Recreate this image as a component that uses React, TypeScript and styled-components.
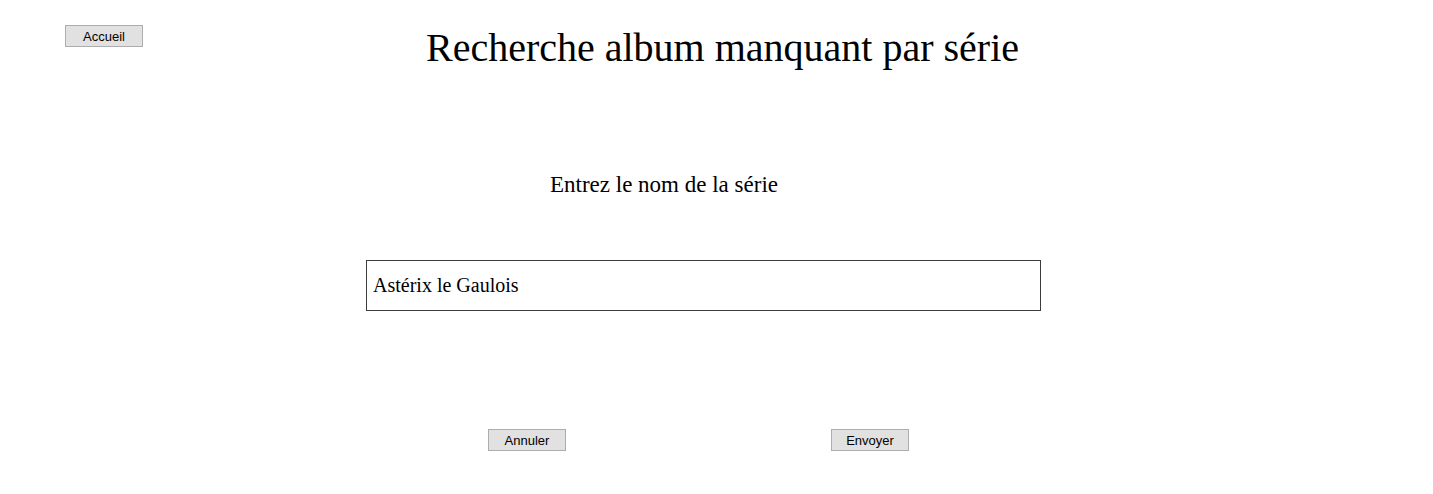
import React from "react"
import styled, { createGlobalStyle } from "styled-components"

const GlobalStyle = createGlobalStyle`
  html, body {
    margin: 0;
    padding: 0;
    background: #ffffff;
  }
  body {
    font-family: "Liberation Serif", "Times New Roman", serif;
    color: #000000;
  }
`

const App = () => {
  return (
    <>
      <GlobalStyle />
      <Page>
        <Header>
          <HeaderSide>
            <Button>Accueil</Button>
          </HeaderSide>
          <Title>Recherche album manquant par série</Title>
          <HeaderSide />
        </Header>
        <Form>
          <Label htmlFor="serie">Entrez le nom de la série</Label>
          <SeriesInput id="serie" defaultValue="Astérix le Gaulois" />
          <Actions>
            <Button type="reset">Annuler</Button>
            <Button type="submit">Envoyer</Button>
          </Actions>
        </Form>
      </Page>
    </>
  )
}

const Page = styled.div`
  width: 1433px;
  height: 494px;
  display: flex;
  flex-direction: column;
`

const Header = styled.header`
  display: grid;
  grid-template-columns: 1fr auto 1fr;
  align-items: start;
  padding: 25px 0 0 12px;
`

const HeaderSide = styled.div`
  padding-left: 53px;
`

const Title = styled.h1`
  margin: 0;
  font-size: 40px;
  font-weight: normal;
  line-height: 46px;
`

const Form = styled.form`
  width: 675px;
  margin: 101px 0 0 366px;
  display: flex;
  flex-direction: column;
`

const Label = styled.label`
  display: block;
  font-size: 23px;
  line-height: 26px;
  text-align: center;
  padding-right: 79px;
`

const SeriesInput = styled.input`
  box-sizing: border-box;
  width: 675px;
  height: 51px;
  margin-top: 62px;
  padding: 0 6px;
  border: 1px solid #3c3c3c;
  font-family: "Liberation Serif", "Times New Roman", serif;
  font-size: 20px;
  color: #000000;
  outline: none;
`

const Actions = styled.div`
  display: flex;
  justify-content: space-between;
  padding: 0 132px 0 122px;
  margin-top: 118px;
`

const Button = styled.button`
  box-sizing: border-box;
  width: 78px;
  height: 22px;
  padding: 0;
  background: #e1e1e1;
  border: 1px solid #adadad;
  font-family: "Liberation Sans", Arial, sans-serif;
  font-size: 13px;
  color: #000000;
`

export default App
